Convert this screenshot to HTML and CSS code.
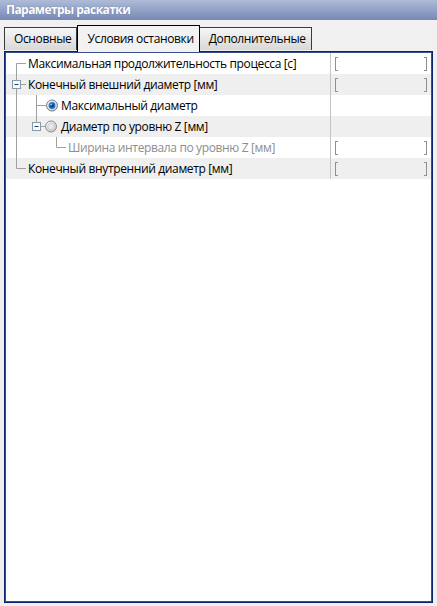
FILE: index.html
```html
<!DOCTYPE html>
<html lang="ru">
<head>
<meta charset="utf-8">
<title>Параметры раскатки</title>
<link rel="stylesheet" href="styles.css">
</head>
<body>
<div class="window">
  <div class="titlebar">Параметры раскатки</div>
  <div class="tabs">
    <div class="tab">Основные</div>
    <div class="tab active">Условия остановки</div>
    <div class="tab">Дополнительные</div>
  </div>
  <div class="panel">
    <div class="tree">
      <div class="row">
        <div class="name">
          <svg class="gut" width="23" height="21" viewBox="0 0 23 21">
            <path d="M11.5 10.5V21M11.5 10.5H21" class="ln"/>
          </svg>
          <span class="label">Максимальная продолжительность процесса [с]</span>
        </div>
        <div class="value"><span class="br l"></span><span class="br r"></span></div>
      </div>
      <div class="row alt">
        <div class="name">
          <svg class="gut" width="23" height="21" viewBox="0 0 23 21">
            <path d="M11.5 0V6.5M11.5 14.5V21M15.5 10.5H21" class="ln"/>
            <rect x="7.5" y="6.5" width="8" height="8" class="box"/>
            <path d="M9.5 10.5H13.5" class="minus"/>
          </svg>
          <span class="label">Конечный внешний диаметр [мм]</span>
        </div>
        <div class="value"><span class="br l"></span><span class="br r"></span></div>
      </div>
      <div class="row">
        <div class="name">
          <svg class="gut" width="56" height="21" viewBox="0 0 56 21">
            <defs>
              <radialGradient id="rg" cx="0.35" cy="0.3" r="0.8">
                <stop offset="0" stop-color="#ffffff"/>
                <stop offset="1" stop-color="#c8c8c8"/>
              </radialGradient>
            </defs>
            <path d="M11.5 0V21M31.5 0V21M31.5 10.5H41" class="ln"/>
            <circle cx="47" cy="10.5" r="5.5" fill="url(#rg)" stroke="#707c8c"/>
            <circle cx="47" cy="10.5" r="3.4" fill="#1e78c8"/>
            <circle cx="47" cy="10.5" r="2" fill="#0a3d80"/>
            <circle cx="46.2" cy="9.6" r="1" fill="#9fd0ff"/>
          </svg>
          <span class="label">Максимальный диаметр</span>
        </div>
        <div class="value"></div>
      </div>
      <div class="row alt">
        <div class="name">
          <svg class="gut" width="56" height="21" viewBox="0 0 56 21">
            <defs>
              <radialGradient id="rg2" cx="0.35" cy="0.3" r="0.8">
                <stop offset="0" stop-color="#ffffff"/>
                <stop offset="1" stop-color="#c4c4c4"/>
              </radialGradient>
            </defs>
            <path d="M11.5 0V21M31.5 0V6.5M35.5 10.5H40" class="ln"/>
            <rect x="27.5" y="6.5" width="8" height="8" class="box"/>
            <path d="M29.5 10.5H33.5" class="minus"/>
            <circle cx="46" cy="10.5" r="5.5" fill="url(#rg2)" stroke="#8c8c8c"/>
            <circle cx="46" cy="10.5" r="3.3" fill="#e8e8e8" stroke="#bcbcbc" stroke-width="0.7"/>
          </svg>
          <span class="label">Диаметр по уровню Z [мм]</span>
        </div>
        <div class="value"></div>
      </div>
      <div class="row">
        <div class="name">
          <svg class="gut" width="63" height="21" viewBox="0 0 63 21">
            <path d="M11.5 0V21M51.5 0V10.5H61" class="ln"/>
          </svg>
          <span class="label dim">Ширина интервала по уровню Z [мм]</span>
        </div>
        <div class="value"><span class="br l"></span><span class="br r"></span></div>
      </div>
      <div class="row alt">
        <div class="name">
          <svg class="gut" width="23" height="21" viewBox="0 0 23 21">
            <path d="M11.5 0V10.5H21" class="ln"/>
          </svg>
          <span class="label">Конечный внутренний диаметр [мм]</span>
        </div>
        <div class="value"><span class="br l"></span><span class="br r"></span></div>
      </div>
    </div>
  </div>
</div>
</body>
</html>
```
FILE: styles.css
```css
* { box-sizing: border-box; }
html, body { margin: 0; padding: 0; }
body {
  width: 437px;
  height: 606px;
  background: #f0f0f0;
  font-family: "Open Sans", "Noto Sans", sans-serif;
  font-size: 12px;
  letter-spacing: -0.36px;
  color: #000;
  overflow: hidden;
}
.window {
  display: flex;
  flex-direction: column;
  height: 606px;
}
.titlebar {
  height: 20px;
  line-height: 20px;
  padding-left: 6px;
  font-weight: bold;
  letter-spacing: -0.55px;
  color: #fff;
  text-shadow: 0 0 1px #5a6a90;
  background: linear-gradient(#aebcd8, #7688b6);
}
.tabs {
  display: flex;
  align-items: flex-end;
  height: 31px;
  padding-left: 4px;
  position: relative;
  z-index: 1;
}
.tab {
  height: 23px;
  line-height: 21px;
  padding: 0 5px 0 9px;
  border: 1px solid #3a3a3a;
  border-bottom: none;
  background: linear-gradient(#f6f6f6, #d8d8d8);
  margin-bottom: 1px;
}
.tab + .tab { border-left: none; }
.tab.active {
  height: 27px;
  line-height: 25px;
  border: 1px solid #000;
  border-bottom: none;
  background: #f2f2f2;
  margin-bottom: -1px;
  padding: 0 5px 0 9px;
}
.tab.active + .tab { border-left: none; }
.panel {
  flex: 1;
  margin: 0 4px 3px 4px;
  border: 1px solid #0c2470;
  box-shadow: inset 0 0 0 1px #3a4f8a;
  background: #fff;
  padding: 1px 1px;
}
.tree {
  display: flex;
  flex-direction: column;
}
.row {
  display: grid;
  grid-template-columns: 325px 100px;
  height: 21px;
}
.row.alt { background: #efefef; }
.name {
  display: flex;
  align-items: center;
  border-right: 1px solid #c4c4c4;
  white-space: nowrap;
  overflow: hidden;
}
.gut { flex: none; display: block; margin-left: -1px; }
.ln { stroke: #a0a0a0; stroke-width: 1; fill: none; }
.box { fill: #fafafa; stroke: #8a98ac; stroke-width: 1; }
.minus { stroke: #1c3e70; stroke-width: 1; }
.label { padding-left: 0; }
.label.dim { color: #8e8e8e; }
.value {
  display: flex;
  align-items: center;
  justify-content: space-between;
  padding: 0 4px 0 4px;
}
.br {
  width: 3px;
  height: 14px;
  border: 1px solid #909090;
}
.br.l { border-right: none; }
.br.r { border-left: none; }
```
